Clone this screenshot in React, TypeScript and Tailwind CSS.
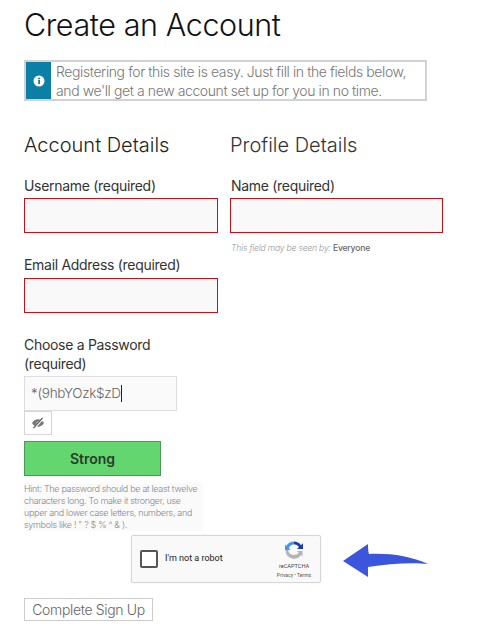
import React from "react";

const font = { fontFamily: '"Inter", "Liberation Sans", sans-serif' };

function Label({ children, className = "" }: { children: React.ReactNode; className?: string }) {
  return <div className={`text-[14px] leading-[19px] text-[#333] tracking-[-0.3px] ${className}`}>{children}</div>;
}

function ErrorInput() {
  return <div className="h-[35px] w-full border border-[#cc0f14] bg-[#f9f9f9]" />;
}

export default function App() {
  return (
    <div className="relative w-[478px] h-[633px] overflow-hidden bg-white px-6 pt-[5px]" style={font}>
      <h1 className="text-[30.5px] leading-[40px] font-light text-[#111] tracking-[-0.4px]">Create an Account</h1>

      <div className="mt-[15px] flex h-[41px] w-[403px] border-2 border-[#d2d2d2]">
        <div className="flex w-[25px] items-center justify-center bg-[#0b7fa6]">
          <svg width="12" height="12" viewBox="0 0 12 12">
            <circle cx="6" cy="6" r="5.5" fill="#fff" />
            <rect x="5.2" y="5" width="1.8" height="4" fill="#0b7fa6" />
            <rect x="5.2" y="2.7" width="1.8" height="1.6" fill="#0b7fa6" />
          </svg>
        </div>
        <div className="pl-[5px] text-[14px] leading-[19px] font-light tracking-[-0.4px] text-[#777] whitespace-nowrap">
          Registering for this site is easy. Just fill in the fields below,
          <br />
          and we'll get a new account set up for you in no time.
        </div>
      </div>

      <div className="mt-[30px] flex gap-[12px] items-start">
        <div className="w-[194px]">
          <h2 className="text-[20px] leading-[28px] font-light text-[#222]">Account Details</h2>
          <Label className="mt-[17px]">Username (required)</Label>
          <div className="mt-[3px]"><ErrorInput /></div>
          <Label className="mt-[22px]">Email Address (required)</Label>
          <div className="mt-[4px]"><ErrorInput /></div>
          <Label className="mt-[22px] w-[150px]">Choose a Password (required)</Label>
          <div className="mt-[3px] flex h-[35px] w-[153px] items-center border border-[#ddd] bg-[#fafafa] pl-[6px] text-[13.5px] font-light tracking-[-0.3px] text-[#666]">
            *(9hbYOzk$zD<span className="h-[17px] w-px bg-[#222]" />
          </div>
          <div className="flex h-[24px] w-[28px] items-center justify-center border border-[#d6d6d6]">
            <svg width="14" height="12" viewBox="0 0 14 12" fill="#777">
              <path d="M1 6c1.500-2.500 3.600-3.800 6-3.800S11.500 3.500 13 6c-1.500 2.500-3.600 3.800-6 3.800S2.500 8.500 1 6z" />
              <circle cx="7" cy="6" r="1.500" fill="#ddd" />
              <path d="M3 11.500 12 1" stroke="#fff" strokeWidth="2.200" />
              <path d="M2.500 11.200 11.500.800" stroke="#555" strokeWidth="1.200" />
            </svg>
          </div>
          <div className="mt-[6px] flex h-[35px] w-[137px] items-center justify-center border border-[#4a9a55] bg-[#63d66f] text-[14px] font-semibold text-[#2b3a2e]">
            Strong
          </div>
          <div className="mt-[7px] h-[48px] w-[179px] bg-[#fafafa] text-[9px] leading-[12px] font-light text-[#888] tracking-[-0.32px]">
            Hint: The password should be at least twelve characters long. To make it stronger, use upper and lower case letters, numbers, and symbols like ! " ? $ % ^ &amp; ).
          </div>
        </div>

        <div className="w-[213px]">
          <h2 className="text-[20px] leading-[28px] font-light text-[#333]">Profile Details</h2>
          <Label className="mt-[17px] pl-px">Name (required)</Label>
          <div className="mt-[3px]"><ErrorInput /></div>
          <div className="mt-[9px] pl-px text-[8.6px] leading-[12px] font-light italic text-[#999] tracking-[-0.2px] whitespace-nowrap">
            This field may be seen by: <span className="not-italic font-medium text-[#666]">Everyone</span>
          </div>
        </div>
      </div>

      <div className="mt-[4px] ml-[107px] flex items-center gap-[22px]">
        <div className="flex h-[48px] w-[190px] items-center justify-between rounded-[2px] border border-[#d6d6d6] bg-[#f9f9f9] pl-[8px] pr-[8px] shadow-[0_0_2px_rgba(0,0,0,0.08)]" style={{ fontFamily: '"Roboto", sans-serif' }}>
          <div className="flex items-center gap-[7px]">
            <div className="h-[18px] w-[18px] rounded-[2px] border-2 border-[#555] bg-white" />
            <span className="text-[9px] text-[#222]">I'm not a robot</span>
          </div>
          <div className="flex w-[36px] flex-col items-center">
            <svg width="20" height="20" viewBox="0 0 20 20" fill="none">
              <path d="M10 1.500a8.500 8.500 0 0 1 7 3.700l2-2V9h-6l2-2a6 6 0 0 0-5-2.800z" fill="#1c3aa9" />
              <path d="M10 1.500A8.500 8.500 0 0 0 2.300 6L1 4.500V10h5.500L4.800 8.300A6 6 0 0 1 10 4.200z" fill="#4a90f5" />
              <path d="M1.500 10A8.500 8.500 0 0 0 17 15l1.500 1.500V11h-5.500l1.800 1.800A6 6 0 0 1 4.200 10z" fill="#b5b5b5" />
            </svg>
            <span className="mt-[3px] text-[5.6px] leading-[7px] text-[#444] whitespace-nowrap">reCAPTCHA</span>
            <span className="mt-[2px] text-[5px] leading-[6px] text-[#555] whitespace-nowrap">Privacy • Terms</span>
          </div>
        </div>
        <svg width="85" height="33" viewBox="0 0 85 33" className="mt-[3px]">
          <path d="M0 17 25 0 C25 4 25 7 26 10 C46 9 68 12 85 20 C68 18 45 20 25 23 C25 26 25 29 25 33 Z" fill="#3b55dc" />
        </svg>
      </div>

      <button className="mt-[15px] flex h-[23px] w-[129px] items-center justify-center border border-[#ccc] text-[14px] font-light tracking-[-0.35px] text-[#666]">
        Complete Sign Up
      </button>
    </div>
  );
}
